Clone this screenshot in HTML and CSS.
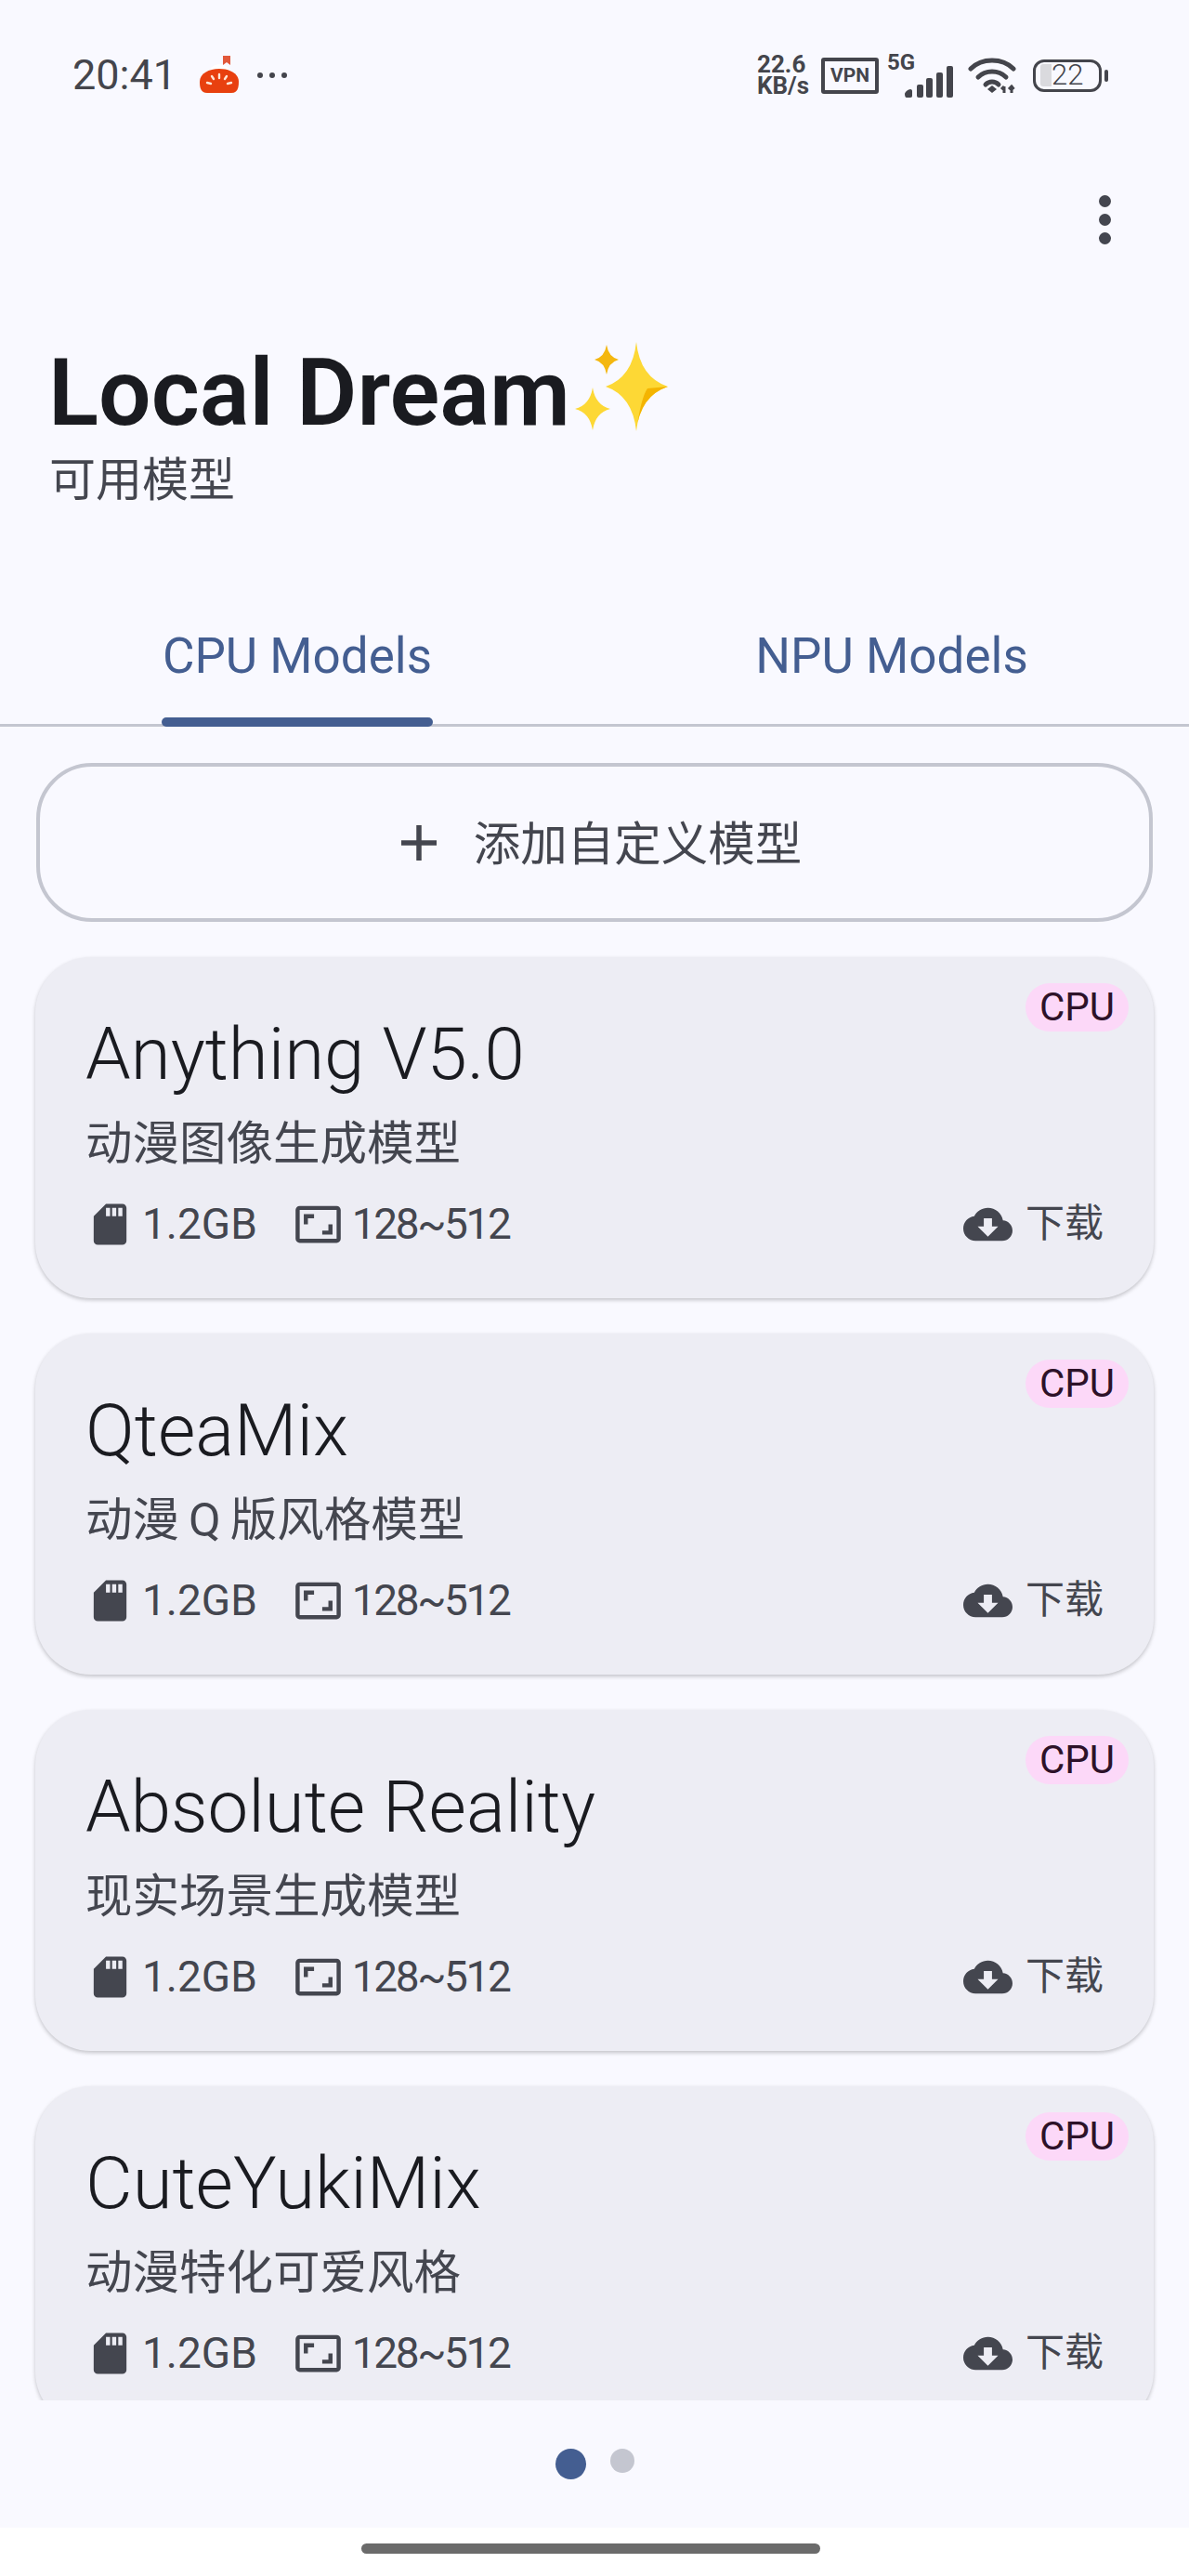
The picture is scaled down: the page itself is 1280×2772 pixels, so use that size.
FILE: index.html
```html
<!DOCTYPE html>
<html lang="zh">
<head>
    <meta charset="utf-8">
    <title>Local Dream</title>
    <link rel="stylesheet" href="styles.css">
</head>
<body>
    <svg class="defs" width="0" height="0">
        <symbol id="i-sd" viewBox="0 0 24 24"><path d="M18 2h-8L4.020 8 4 20c0 1.100.9 2 2 2h12c1.100 0 2-.9 2-2V4c0-1.100-.9-2-2-2zm-6 6h-2V4h2v4zm3 0h-2V4h2v4zm3 0h-2V4h2v4z"/></symbol>
        <symbol id="i-ratio" viewBox="0 0 24 24"><path d="M19 12h-2v3h-3v2h5v-5zM7 9h3V7H5v5h2V9zm14-6H3c-1.100 0-2 .9-2 2v14c0 1.100.9 2 2 2h18c1.100 0 2-.9 2-2V5c0-1.100-.9-2-2-2zm0 16.010H3V4.990h18v14.020z"/></symbol>
        <symbol id="i-cloud" viewBox="0 0 24 24"><path d="M19.350 10.040C18.670 6.590 15.640 4 12 4 9.110 4 6.600 5.640 5.350 8.040 2.340 8.360 0 10.910 0 14c0 3.310 2.690 6 6 6h13c2.760 0 5-2.240 5-5 0-2.640-2.050-4.780-4.650-4.960zM17 13l-5 5-5-5h3V9h4v4h3z"/></symbol>
    </svg>

    <div class="screen">
        <!-- barra de estado -->
        <div class="status">
            <span class="time">20:41</span>
            <svg class="tomato" width="44" height="42" viewBox="0 0 44 42">
                <path d="M26 1h8v10l-4-3-4 3z" fill="#e2583a"/>
                <path d="M12 17C14 8 30 8 33 17z" fill="#ffffff"/>
                <path d="M1 29C1 20 11 15 22 15s21 5 21 14c0 6-1 12-8 12H9c-7 0-8-6-8-12z" fill="#e8400f"/>
                <g stroke="#ffe6d6" stroke-width="2.400" stroke-linecap="round">
                    <path d="M22 21v4M14 23l2 3M30 23l-2 3M9 30l4 1M35 30l-4 1"/>
                </g>
            </svg>
            <span class="more-dots"><i></i><i></i><i></i></span>

            <div class="status-right">
                <div class="speed"><span>22.6</span><span>KB/s</span></div>
                <span class="vpn">VPN</span>
                <span class="net">5G</span>
                <svg class="signal" width="52" height="34" viewBox="0 0 52 34" fill="#44454c">
                    <path d="M0 30c0-2 4-5 6-5 1.500 0 2 1 2 2v5c0 1-.5 2-2 2H2c-1.500 0-2-2-2-4z"/>
                    <rect x="13" y="20" width="7" height="14" rx="2"/>
                    <rect x="23" y="13" width="7" height="21" rx="2"/>
                    <rect x="34" y="7" width="7" height="27" rx="2"/>
                    <rect x="45" y="0" width="7" height="34" rx="2"/>
                </svg>
                <svg class="wifi" width="52" height="40" viewBox="0 0 52 40" fill="none" stroke="#44454c" stroke-width="5" stroke-linecap="round">
                    <path d="M3 13C15 1 37 1 49 13"/>
                    <path d="M11 22C19 14 33 14 41 22"/>
                    <path d="M19 30C23 26 29 26 33 30"/>
                    <path d="M26 31l5 4-5 4-5-4z" fill="#44454c" stroke="none"/>
                    <path d="M39 32v7M36 35l3-3M47 39v-8M44 35l3-3 2.500 3" stroke-width="3" stroke-linecap="butt"/>
                </svg>
                <div class="battery">
                    <div class="battery-body"><i class="battery-fill"></i><span>22</span></div>
                    <i class="battery-tip"></i>
                </div>
            </div>
        </div>

        <div class="actions">
            <span class="menu"><i></i><i></i><i></i></span>
        </div>

        <div class="header">
            <h1 class="title">Local Dream<svg class="sparkles" width="104" height="100" viewBox="0 0 104 100">
                <path d="M68 2Q72 40 102 50Q72 60 68 98Q64 60 35 50Q64 40 68 2z" fill="#fdd835"/>
                <path d="M102 50Q72 60 68 98Q73 62 80 52z" fill="#f4b400"/>
                <path d="M36 5Q38 18 49 21Q38 24 36 37Q34 24 23 21Q34 18 36 5z" fill="#f4b70f"/>
                <path d="M21 51Q24 70 40 74Q24 78 21 97Q18 78 2 74Q18 70 21 51z" fill="#fdd835"/>
            </svg></h1>
            <p class="subtitle">可用模型</p>
        </div>

        <div class="tabs">
            <div class="tab active"><span>CPU Models</span></div>
            <div class="tab"><span>NPU Models</span></div>
        </div>

        <div class="list">
            <div class="add-btn">
                <svg width="38" height="38" viewBox="0 0 38 38" stroke="#44464f" stroke-width="5.500"><path d="M19 0v38M0 19h38"/></svg>
                <span class="add-label">添加自定义模型</span>
            </div>

            <div class="card">
                <span class="badge">CPU</span>
                <div class="name">Anything V5.0</div>
                <div class="desc">动漫图像生成模型</div>
                <div class="meta">
                    <svg class="ico"><use href="#i-sd"/></svg><span class="size">1.2GB</span>
                    <svg class="ico"><use href="#i-ratio"/></svg><span class="res">128~512</span>
                    <span class="download"><svg class="ico"><use href="#i-cloud"/></svg>下载</span>
                </div>
            </div>

            <div class="card">
                <span class="badge">CPU</span>
                <div class="name">QteaMix</div>
                <div class="desc">动漫<span class="latin">Q</span>版风格模型</div>
                <div class="meta">
                    <svg class="ico"><use href="#i-sd"/></svg><span class="size">1.2GB</span>
                    <svg class="ico"><use href="#i-ratio"/></svg><span class="res">128~512</span>
                    <span class="download"><svg class="ico"><use href="#i-cloud"/></svg>下载</span>
                </div>
            </div>

            <div class="card">
                <span class="badge">CPU</span>
                <div class="name">Absolute Reality</div>
                <div class="desc">现实场景生成模型</div>
                <div class="meta">
                    <svg class="ico"><use href="#i-sd"/></svg><span class="size">1.2GB</span>
                    <svg class="ico"><use href="#i-ratio"/></svg><span class="res">128~512</span>
                    <span class="download"><svg class="ico"><use href="#i-cloud"/></svg>下载</span>
                </div>
            </div>

            <div class="card">
                <span class="badge">CPU</span>
                <div class="name">CuteYukiMix</div>
                <div class="desc">动漫特化可爱风格</div>
                <div class="meta">
                    <svg class="ico"><use href="#i-sd"/></svg><span class="size">1.2GB</span>
                    <svg class="ico"><use href="#i-ratio"/></svg><span class="res">128~512</span>
                    <span class="download"><svg class="ico"><use href="#i-cloud"/></svg>下载</span>
                </div>
            </div>
        </div>

        <div class="pager">
            <i class="dot current"></i>
            <i class="dot"></i>
        </div>

        <div class="navbar"><i class="handle"></i></div>
    </div>
</body>
</html>
```

FILE: styles.css
```css
* {
    box-sizing: border-box;
}

body {
    margin: 0;
    background-color: #f9f9ff;
    font-family: Roboto, "Noto Sans CJK SC", sans-serif;
    color: #44464f;
}

.defs {
    display: block;
}

.screen {
    display: flex;
    flex-direction: column;
    height: 2772px;
    overflow: hidden;
}

/* Barra de estado */
.status {
    display: flex;
    align-items: center;
    height: 162px;
    padding: 0 87px 0 78px;
    color: #44454c;
}

.time {
    font-size: 45px;
    line-height: 50px;
}

.tomato {
    margin: -3px 0 0 24px;
}

.more-dots {
    display: flex;
    gap: 7px;
    margin-left: 19px;
}

.more-dots i {
    width: 6px;
    height: 6px;
    border-radius: 50%;
    background-color: #44454c;
}

.status-right {
    display: flex;
    align-items: center;
    margin-left: auto;
}

.speed {
    display: flex;
    flex-direction: column;
    width: 69px;
    font-size: 26px;
    font-weight: 700;
    line-height: 23px;
}

.vpn {
    display: block;
    width: 62px;
    height: 39px;
    border: 4px solid #44454c;
    border-radius: 3px;
    font-size: 21px;
    font-weight: 700;
    line-height: 31px;
    text-align: center;
}

.net {
    align-self: flex-start;
    margin: -4px 0 0 9px;
    width: 19px;
    font-size: 24px;
    font-weight: 700;
    line-height: 28px;
}

.signal {
    margin-top: 14px;
}

.wifi {
    margin-left: 16px;
}

.battery {
    display: flex;
    align-items: center;
    margin-left: 18px;
}

.battery-body {
    display: flex;
    align-items: center;
    width: 74px;
    height: 35px;
    padding-left: 5px;
    border: 3.500px solid #44454c;
    border-radius: 12px;
}

.battery-fill {
    width: 12px;
    height: 24px;
    border-radius: 3px 0 0 3px;
    background-color: #dadade;
}

.battery-body span {
    font-size: 31px;
    font-weight: 300;
    line-height: 28px;
}

.battery-tip {
    width: 4px;
    height: 13px;
    margin-left: 3px;
    border-radius: 2px;
    background-color: #44454c;
}

/* Cabecera */
.actions {
    display: flex;
    justify-content: flex-end;
    align-items: center;
    height: 148px;
    padding-right: 84px;
}

.menu {
    display: flex;
    flex-direction: column;
    gap: 7px;
}

.menu i {
    width: 13px;
    height: 13px;
    border-radius: 50%;
    background-color: #44464f;
}

.header {
    padding: 53px 0 0 52px;
}

.title {
    display: flex;
    align-items: center;
    margin: 0;
    font-size: 100px;
    font-weight: 600;
    line-height: 120px;
    color: #1a1b20;
}

.sparkles {
    margin: -14px 0 0 3px;
}

.subtitle {
    margin: 6px 0 0 1px;
    font-size: 50px;
    line-height: 56px;
}

/* Pestanas */
.tabs {
    display: flex;
    height: 118px;
    margin-top: 119px;
    border-bottom: 3px solid #c4c6d0;
}

.tab {
    display: flex;
    flex: 1;
    justify-content: center;
    font-size: 53px;
    color: #445e91;
}

.tab span {
    position: relative;
    height: 118px;
    line-height: 84px;
}

.tab.active span::after {
    content: "";
    position: absolute;
    left: -1px;
    right: -1px;
    bottom: 0;
    height: 10px;
    border-radius: 5px;
    background-color: #445e91;
}

/* Lista de modelos */
.list {
    flex: 1;
    min-height: 0;
    overflow: hidden;
    padding: 39px 38px 0;
}

.add-btn {
    display: flex;
    justify-content: center;
    align-items: center;
    gap: 40px;
    height: 171px;
    margin: 0 1px 38px;
    padding-left: 15px;
    border: 4px solid #c4c6d0;
    border-radius: 60px;
    font-size: 50.500px;
}

.add-label {
    margin-bottom: 6px;
}

.card {
    position: relative;
    height: 367px;
    margin-bottom: 38px;
    padding: 59px 0 0 54px;
    border-radius: 60px;
    background-color: #ededf4;
    box-shadow: 0 2px 4px rgba(0, 0, 0, 0.22);
}

.badge {
    position: absolute;
    top: 28px;
    right: 27px;
    width: 111px;
    height: 52px;
    border-radius: 26px;
    background-color: #fcd8f8;
    font-size: 42px;
    line-height: 52px;
    text-align: center;
    color: #2d1229;
}

.name {
    font-size: 78px;
    font-weight: 300;
    line-height: 92px;
    color: #1a1b20;
}

.desc {
    margin-top: 21px;
    font-size: 50.500px;
    line-height: 58px;
}

.latin {
    margin: 0 10px;
}

.meta {
    display: flex;
    align-items: center;
    margin: 30px 54px 0 0;
    font-size: 46px;
    line-height: 54px;
}

.ico {
    flex: none;
    width: 53px;
    height: 53px;
    fill: #44464f;
}

.size {
    margin: 0 39px 0 8px;
}

.res {
    margin-left: 10px;
    letter-spacing: -2.400px;
}

.download {
    display: flex;
    align-items: center;
    gap: 14px;
    margin-left: auto;
    font-size: 42px;
}

/* Indicador de pagina */
.pager {
    display: flex;
    flex: none;
    justify-content: center;
    align-items: flex-start;
    gap: 26px;
    height: 137px;
    padding: 52px 0 0;
}

.dot {
    width: 26px;
    height: 26px;
    border-radius: 50%;
    background-color: #c4c6d0;
}

.dot.current {
    width: 33px;
    height: 33px;
    background-color: #445e91;
}

.navbar {
    flex: none;
    height: 52px;
    padding: 17px 0 0 389px;
    background-color: #fff;
}

.handle {
    display: block;
    width: 494px;
    height: 11px;
    border-radius: 6px;
    background-color: #6b6b6b;
}
```
